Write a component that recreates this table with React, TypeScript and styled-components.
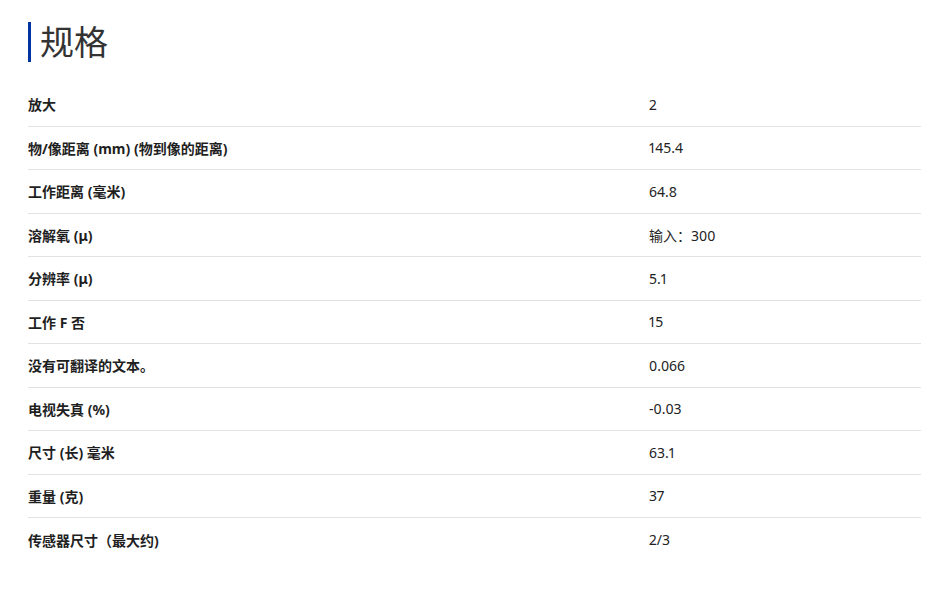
import React from 'react';
import styled, { createGlobalStyle } from 'styled-components';

const GlobalStyle = createGlobalStyle`
  body {
    margin: 0;
    background: #ffffff;
    font-family: "Noto Sans", "Noto Sans CJK SC", sans-serif;
    color: #222222;
  }
`;

const Page = styled.div`
  padding: 22px 15px 0 28px;
`;

const Heading = styled.h2`
  margin: 0 0 21px;
  padding-left: 9px;
  border-left: 3px solid #0033a1;
  font-size: 34px;
  font-weight: 400;
  line-height: 40px;
  color: #333333;
`;

const Table = styled.div`
  display: flex;
  flex-direction: column;
`;

const Row = styled.div<{ $last?: boolean }>`
  display: grid;
  grid-template-columns: 621px 1fr;
  align-items: center;
  height: 43.5px;
  border-bottom: ${(p) => (p.$last ? 'none' : '1px solid #e2e2e4')};
  box-sizing: border-box;
  font-size: 14px;
  font-variant-numeric: proportional-nums;
`;

const Label = styled.div`
  font-weight: 700;
  color: #1f1f1f;
`;

const Value = styled.div`
  font-weight: 400;
  color: #222222;
`;

const specs: [string, string][] = [
  ['放大', '2'],
  ['物/像距离 (mm) (物到像的距离)', '145.4'],
  ['工作距离 (毫米)', '64.8'],
  ['溶解氧 (μ)', '输入：300'],
  ['分辨率 (μ)', '5.1'],
  ['工作 F 否', '15'],
  ['没有可翻译的文本。', '0.066'],
  ['电视失真 (%)', '-0.03'],
  ['尺寸 (长) 毫米', '63.1'],
  ['重量 (克)', '37'],
  ['传感器尺寸（最大约)', '2/3'],
];

const App: React.FC = () => (
  <>
    <GlobalStyle />
    <Page>
      <Heading>规格</Heading>
      <Table>
        {specs.map(([label, value], i) => (
          <Row key={label} $last={i === specs.length - 1}>
            <Label>{label}</Label>
            <Value>{value}</Value>
          </Row>
        ))}
      </Table>
    </Page>
  </>
);

export default App;
